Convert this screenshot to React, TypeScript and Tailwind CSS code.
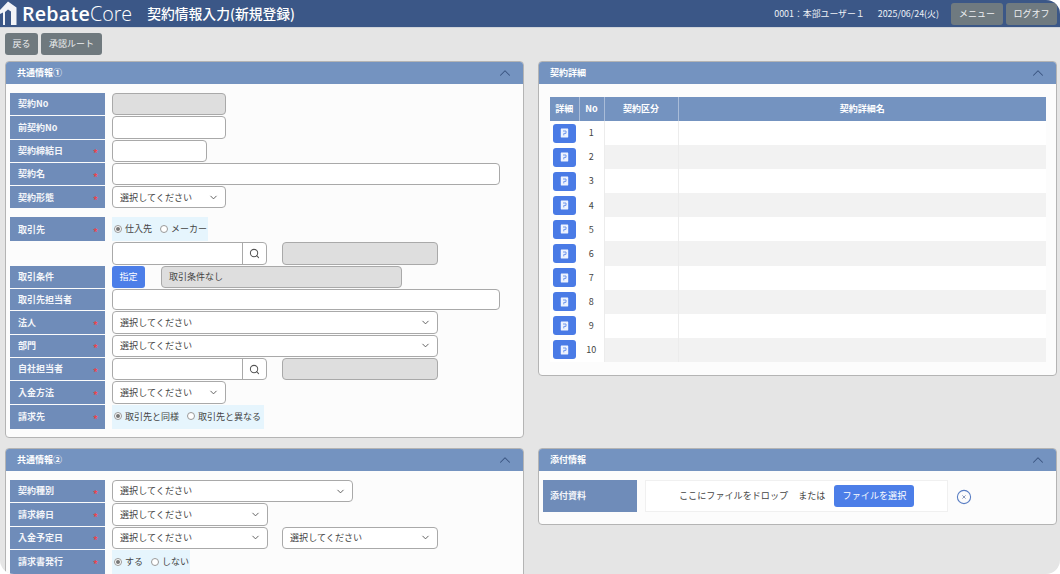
import React from "react";
import { ChevronDown, ChevronUp, Search } from "lucide-react";

const font = "[font-family:'Noto_Sans_CJK_JP','Noto_Sans',sans-serif]";

function Panel({ title, children, className }: { title: string; children: React.ReactNode; className: string }) {
  return (
    <section className={`bg-[#fcfcfc] rounded-[4px] border border-[#b4b4b4] overflow-hidden shrink-0 ${className}`}>
      <header className="h-[22px] bg-[#7493c0] flex items-center justify-between pl-[11px] pr-[9px] text-white text-[9px] font-bold">
        <span>{title}</span>
        <ChevronUp className="w-[18px] h-[18px] text-[#3a5580]" strokeWidth={1.4} />
      </header>
      {children}
    </section>
  );
}

function Row({ label, req, children, h = "h-[22.3px]", mt = "" }: { label?: string; req?: boolean; children: React.ReactNode; h?: string; mt?: string }) {
  return (
    <div className={`flex ${h} ${mt}`}>
      <div className={`w-[95px] shrink-0 mr-[7px] flex items-center justify-between pl-[8px] pr-[7px] text-[9px] font-bold text-[#f4f6fa] ${label ? "bg-[#6f8cb9]" : ""}`}>
        <span>{label}</span>
        {req && <span className="text-[#e8464f] text-[10px] translate-y-[2px]">*</span>}
      </div>
      <div className="flex-1 flex items-stretch min-w-0">{children}</div>
    </div>
  );
}

function Input({ w, gray, children }: { w: string; gray?: boolean; children?: React.ReactNode }) {
  return (
    <div className={`${w} h-full rounded-[4px] border border-[#a9a9a9] flex items-center px-[7px] text-[9px] text-[#444] ${gray ? "bg-[#dedede]" : "bg-white"}`}>
      {children}
    </div>
  );
}

function Select({ w, arrow = true }: { w: string; arrow?: boolean }) {
  return (
    <div className={`${w} h-full rounded-[4px] border border-[#a9a9a9] bg-white flex items-center justify-between pl-[7px] pr-[6px] text-[9.1px] text-[#444]`}>
      <span>選択してください</span>
      {arrow && <ChevronDown className="w-[11px] h-[11px] text-[#555]" strokeWidth={2} />}
    </div>
  );
}

function SearchInput() {
  return (
    <div className="w-[155px] h-full rounded-[4px] border border-[#a9a9a9] bg-white flex justify-end">
      <div className="w-[24px] border-l border-[#a9a9a9] flex items-center justify-center">
        <Search className="w-[11px] h-[11px] text-[#555]" strokeWidth={2.2} />
      </div>
    </div>
  );
}

function Radios({ w, options }: { w: string; options: string[] }) {
  return (
    <div className={`${w} h-full bg-[#e6f5fd] flex items-start gap-[8px] pl-[2px] pt-[5px] text-[9px] text-[#444]`}>
      {options.map((o, i) => (
        <span key={o} className="flex items-center gap-[3px]">
          <span className="w-[8px] h-[8px] rounded-full border border-[#999] bg-white flex items-center justify-center">
            {i === 0 && <span className="w-[4px] h-[4px] rounded-full bg-[#777]" />}
          </span>
          {o}
        </span>
      ))}
    </div>
  );
}

function DetailIcon() {
  return (
    <svg width="9" height="10" viewBox="0 0 9 10" aria-hidden="true">
      <rect x="0.8" y="0.5" width="7.4" height="9" rx="0.4" fill="#eef3fe" />
      <path d="M3 3h3v2.4H3.8V7.4" fill="none" stroke="#6f96ec" strokeWidth="1" />
    </svg>
  );
}

function HeadBtn({ children, w }: { children: React.ReactNode; w: string }) {
  return (
    <div className={`${w} h-[22px] rounded-[3px] bg-[#6f7a80] text-[#eef0f2] text-[9px] flex items-center justify-center`}>{children}</div>
  );
}

export default function App() {
  return (
    <div className="w-[1060px] h-[574px] bg-white overflow-hidden">
      <div className={`w-full h-full bg-[#e5e5e5] rounded-b-[14px] rounded-tr-[14px] overflow-hidden ${font}`}>
        <header className="h-[27px] bg-[#3b5787] border-b border-[#d0d4da] flex items-center text-white overflow-hidden box-content">
          <svg width="18" height="27" viewBox="0 0 18 27" className="shrink-0" aria-hidden="true">
            <path d="M-1 11 L8 1.5 L16.5 7.5 V25 H11 V11.5 L8 9.5 L5 12 V25 H-1 Z" fill="#f2f4f8" />
            <path d="M0 14 L3 12.5 V25 H0 Z" fill="#3b5787" />
          </svg>
          <span className="ml-[4px] mt-[1px] text-[19.7px] leading-none [font-family:'Open_Sans',sans-serif] font-semibold tracking-[0.2px]">Rebate</span>
          <span className="mt-[1px] text-[19.7px] leading-none [font-family:'Open_Sans',sans-serif] font-light">Core</span>
          <h1 className="ml-[15px] text-[13.8px] font-medium">契約情報入力(新規登録)</h1>
          <div className="ml-auto flex items-center pr-[3px]">
            <span className="text-[8.9px] text-[#eef1f6]">0001：本部ユーザー１</span>
            <span className="ml-[13px] mr-[12px] text-[8.9px] text-[#eef1f6]">2025/06/24(火)</span>
            <div className="flex gap-[3px]">
              <HeadBtn w="w-[52px]">メニュー</HeadBtn>
              <HeadBtn w="w-[51px]">ログオフ</HeadBtn>
            </div>
          </div>
        </header>

        <div className="flex gap-[3px] pl-[5px] pt-[5px] h-[33px]">
          <div className="w-[33px] h-[22px] rounded-[3px] bg-[#6f797e] text-[#eceeef] text-[9px] flex items-center justify-center">戻る</div>
          <div className="w-[61px] h-[22px] rounded-[3px] bg-[#6f797e] text-[#eceeef] text-[9px] flex items-center justify-center">承認ルート</div>
        </div>

        <div className="flex gap-[14px] pl-[5px]">
          <div className="w-[519px] flex flex-col gap-[10px]">
            <Panel title="共通情報①" className="h-[377px]">
              <div className="pt-[9px] pl-[4px] flex flex-col gap-px">
                <Row label="契約No"><Input w="w-[114px]" gray /></Row>
                <Row label="前契約No"><Input w="w-[114px]" /></Row>
                <Row label="契約締結日" req><Input w="w-[95px]" /></Row>
                <Row label="契約名" req><Input w="w-[388px]" /></Row>
                <Row label="契約形態" req><Select w="w-[114px]" /></Row>
                <Row label="取引先" req h="h-[24px]" mt="mt-[8px]"><Radios w="w-[96px]" options={["仕入先", "メーカー"]} /></Row>
                <Row>
                  <SearchInput />
                  <div className="ml-[15px]"><Input w="w-[156px]" gray /></div>
                </Row>
                <Row label="取引条件">
                  <div className="w-[33px] rounded-[3px] bg-[#4c7ee8] text-white text-[9px] flex items-center justify-center">指定</div>
                  <div className="ml-[16px]"><Input w="w-[241px]" gray>取引条件なし</Input></div>
                </Row>
                <Row label="取引先担当者" h="h-[21.4px]"><Input w="w-[388px]" /></Row>
                <Row label="法人" req><Select w="w-[326px]" /></Row>
                <Row label="部門" req><Select w="w-[326px]" /></Row>
                <Row label="自社担当者" req>
                  <SearchInput />
                  <div className="ml-[15px]"><Input w="w-[156px]" gray /></div>
                </Row>
                <Row label="入金方法" req><Select w="w-[114px]" /></Row>
                <Row label="請求先" req h="h-[24px]"><Radios w="w-[152px]" options={["取引先と同様", "取引先と異なる"]} /></Row>
              </div>
            </Panel>
            <Panel title="共通情報②" className="h-[130px]">
              <div className="pt-[9px] pl-[4px] flex flex-col gap-px">
                <Row label="契約種別" req><Select w="w-[241px]" /></Row>
                <Row label="請求締日" req><Select w="w-[156px]" /></Row>
                <Row label="入金予定日" req>
                  <Select w="w-[156px]" />
                  <div className="ml-[14px]"><Select w="w-[156px]" /></div>
                </Row>
                <Row label="請求書発行" req h="h-[24px]"><Radios w="w-[78px]" options={["する", "しない"]} /></Row>
              </div>
            </Panel>
          </div>

          <div className="w-[519px] flex flex-col gap-[72px]">
            <Panel title="契約詳細" className="h-[315px]">
              <div className="pt-[13px] px-[11px]">
                <table className="w-[496px] border-collapse table-fixed text-[9px] text-[#444]">
                  <thead>
                    <tr className="h-[24px] bg-[#7493c0] text-white font-bold">
                      <th className="w-[29px] font-bold border-r border-[#a9bcd8]">詳細</th>
                      <th className="w-[25px] font-bold border-r border-[#a9bcd8]">No</th>
                      <th className="w-[74px] font-bold border-r border-[#a9bcd8]">契約区分</th>
                      <th className="font-bold">契約詳細名</th>
                    </tr>
                  </thead>
                  <tbody>
                    {[1, 2, 3, 4, 5, 6, 7, 8, 9, 10].map((n) => (
                      <tr key={n} className={`h-[24.1px] ${n % 2 === 0 ? "bg-[#f2f2f2]" : "bg-white"}`}>
                        <td className="p-0 bg-white">
                          <div className="ml-[3px] w-[23px] h-[19px] rounded-[3px] bg-[#4a7be6] flex items-center justify-center"><DetailIcon /></div>
                        </td>
                        <td className="p-0 text-center bg-white">{n}</td>
                        <td className="p-0 border-x border-[#ececec]" />
                        <td className="p-0" />
                      </tr>
                    ))}
                  </tbody>
                </table>
              </div>
            </Panel>
            <Panel title="添付情報" className="h-[77px]">
              <div className="flex pt-[9px] pl-[4px]">
                <div className="w-[94px] h-[32px] bg-[#6f8cb9] text-[#f4f6fa] text-[9px] font-bold flex items-center pl-[7px]">添付資料</div>
                <div className="ml-[8px] w-[303px] h-[32px] bg-white border border-[#f0f0f0] flex items-center text-[9.1px] text-[#444]">
                  <span className="ml-[33px]">ここにファイルをドロップ</span>
                  <span className="ml-[10px]">または</span>
                  <div className="ml-[9px] w-[80px] h-[22px] rounded-[3px] bg-[#4c7ee8] text-white flex items-center justify-center">ファイルを選択</div>
                </div>
                <svg width="16" height="16" viewBox="0 0 16 16" className="ml-[8px] mt-[9px]" aria-hidden="true">
                  <circle cx="8" cy="8" r="6.6" fill="none" stroke="#5b7fc4" strokeWidth="1.1" />
                  <path d="M6.4 6.4l3.2 3.2M9.6 6.4l-3.2 3.2" stroke="#7d8fb5" strokeWidth="0.9" />
                </svg>
              </div>
            </Panel>
          </div>
        </div>
      </div>
    </div>
  );
}
